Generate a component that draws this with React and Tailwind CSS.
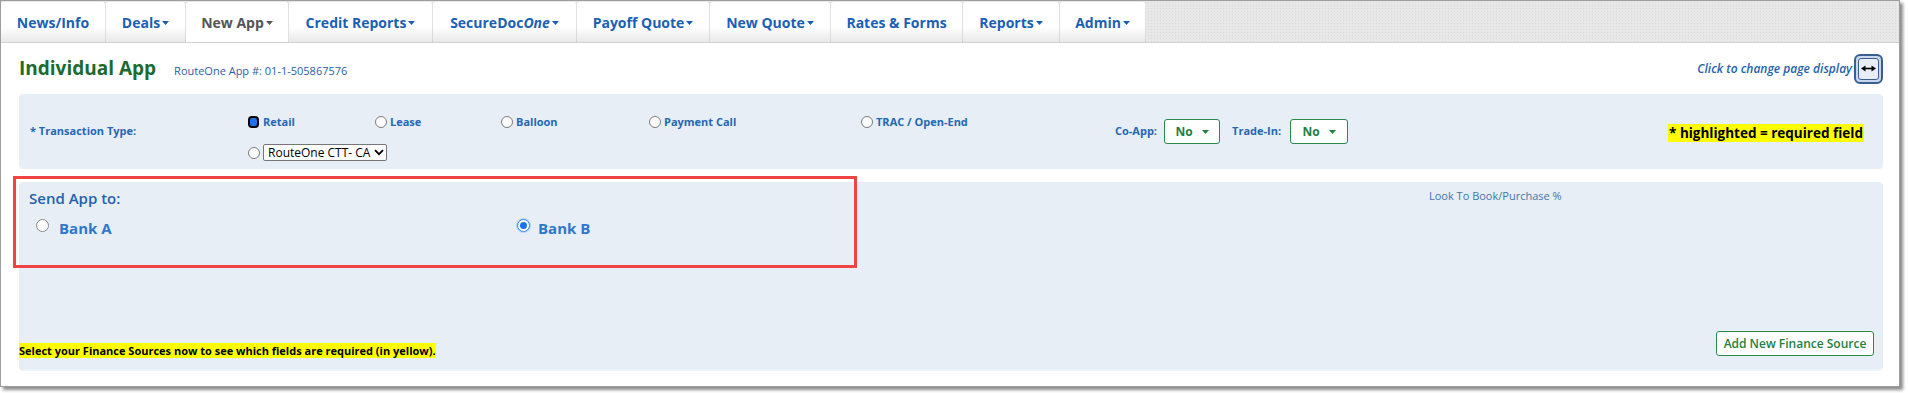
import React from "react";

const Caret = ({ color = "#1b5fb5" }) => (
  <svg width="7" height="4" viewBox="0 0 7 4" className="ml-[2px] mt-[2px] shrink-0">
    <path d="M0 0H7L3.5 4Z" fill={color} />
  </svg>
);

const tabs = [
  { label: "News/Info", w: "w-[105px]" },
  { label: "Deals", w: "w-[80px]", caret: true },
  { label: "New App", w: "w-[103px]", caret: true, active: true },
  { label: "Credit Reports", w: "w-[144px]", caret: true },
  { label: "SecureDoc", italic: "One", w: "w-[144px]", caret: true },
  { label: "Payoff Quote", w: "w-[133px]", caret: true },
  { label: "New Quote", w: "w-[121px]", caret: true },
  { label: "Rates & Forms", w: "w-[132px]" },
  { label: "Reports", w: "w-[97px]", caret: true },
  { label: "Admin", w: "w-[86px]", caret: true },
];

const Radio = () => (
  <span className="inline-block w-[12px] h-[12px] rounded-full border border-[#7a7a7a] bg-white shrink-0" />
);

const RadioOpt = ({ label, w }) => (
  <div className={`${w} flex items-center gap-[3px]`}>
    <Radio />
    <span className="text-[11px] font-bold leading-[16px] text-[#2567b4]">{label}</span>
  </div>
);

const GreenSelect = ({ w }) => (
  <div className={`${w} h-[25px] rounded-[3px] border border-[#2a8a4c] bg-white flex items-center justify-center gap-[9px]`}>
    <span className="text-[12px] font-bold text-[#23803f]">No</span>
    <svg width="7" height="4" viewBox="0 0 7 4">
      <path d="M0 0H7L3.5 4Z" fill="#23803f" />
    </svg>
  </div>
);

export default function App() {
  return (
    <div className="w-[1908px] h-[393px] bg-white font-['Open_Sans',sans-serif]">
      <div className="w-[1900px] h-[387px] border border-[#9d9d9d] shadow-[3px_3px_3px_rgba(0,0,0,0.45)] overflow-hidden flex flex-col bg-white">
        {/* Tab bar */}
        <div className="h-[42px] shrink-0 bg-[#e8e8e8] bg-[radial-gradient(#dadada_1px,transparent_1px)] bg-[length:3px_3px] flex items-end border-b border-[#d2d2d2]">
          {tabs.map((t, i) => (
            <div
              key={i}
              className={`${t.w} h-[40px] shrink-0 flex items-center justify-center rounded-t-[3px] border-r border-dotted border-[#c4c4c4] ${
                t.active ? "bg-white" : "bg-linear-to-b from-white from-[62%] to-[#e9e9e9]"
              }`}
            >
              <span className={`text-[14px] font-bold ${t.active ? "text-[#555555]" : "text-[#1b5fb5]"}`}>
                {t.label}
                {t.italic && <i>{t.italic}</i>}
              </span>
              {t.caret && <Caret color={t.active ? "#555555" : "#1b5fb5"} />}
            </div>
          ))}
        </div>

        <div className="flex flex-col pl-[18px] pr-[16px]">
          {/* Heading row */}
          <div className="h-[51px] flex items-center">
            <div className="flex items-baseline">
              <span className="text-[19px] font-bold text-[#1b6a2f]">Individual App</span>
              <span className="ml-[18px] text-[11px] text-[#2c5ea6]">RouteOne App #: 01-1-505867576</span>
            </div>
            <div className="ml-auto flex items-center">
              <span className="text-[12px] font-semibold italic text-[#2462ad]">Click to change page display</span>
              <span className="ml-[2px] w-[29px] h-[30px] rounded-[6px] border-2 border-[#3a5d93] bg-[#c9d7ea] p-[2px] flex">
                <span className="flex-1 rounded-[3px] border border-[#3a5d93] bg-[#e9eef6] flex items-center justify-center">
                  <svg width="15" height="7" viewBox="0 0 15 7">
                    <path d="M3 3.5H12" stroke="#000" strokeWidth="1.6" />
                    <path d="M0 3.5L4.5 0.5V6.5Z" fill="#000" />
                    <path d="M15 3.5L10.5 0.5V6.5Z" fill="#000" />
                  </svg>
                </span>
              </span>
            </div>
          </div>

          {/* Transaction panel */}
          <div className="h-[75px] rounded-[4px] bg-[#e7eef6] flex items-start">
            <div className="w-[229px] shrink-0 pl-[11px] pt-[29px] text-[11px] font-bold leading-[16px] text-[#2567b4]">
              * Transaction Type:
            </div>
            <div className="w-[867px] shrink-0 pt-[20px]">
              <div className="h-[16px] flex items-center">
                <div className="w-[127px] flex items-center gap-[4px]">
                  <span className="inline-block w-[11px] h-[12px] rounded-[4px] border-2 border-black bg-[#1a73e8] shrink-0" />
                  <span className="text-[11px] font-bold leading-[16px] text-[#2567b4]">Retail</span>
                </div>
                <RadioOpt label="Lease" w="w-[126px]" />
                <RadioOpt label="Balloon" w="w-[148px]" />
                <RadioOpt label="Payment Call" w="w-[212px]" />
                <RadioOpt label="TRAC / Open-End" w="w-[200px]" />
              </div>
              <div className="mt-[14px] flex items-center gap-[3px]">
                <Radio />
                <div className="w-[124px] h-[17px] rounded-[2px] border border-[#767676] bg-white flex items-center pl-[4px] pr-[2px] overflow-hidden">
                  <span className="flex-1 overflow-hidden whitespace-nowrap text-[12px] leading-[15px] text-black">
                    RouteOne CTT- CA Lease
                  </span>
                  <svg width="10" height="7" viewBox="0 0 10 7" className="shrink-0 ml-[1px]">
                    <path d="M1 1.2L5 5.2L9 1.2" stroke="#000" strokeWidth="1.8" fill="none" />
                  </svg>
                </div>
              </div>
            </div>
            <div className="self-center flex items-center">
              <span className="text-[11px] font-bold text-[#2567b4]">Co-App:</span>
              <div className="ml-[7px]">
                <GreenSelect w="w-[56px]" />
              </div>
              <span className="ml-[12px] text-[11px] font-bold text-[#2567b4]">Trade-In:</span>
              <div className="ml-[9px]">
                <GreenSelect w="w-[58px]" />
              </div>
            </div>
            <div className="ml-auto self-center pr-[19px]">
              <span className="bg-[#ffff00] text-[13.5px] font-bold leading-[17px] text-black px-[1px]">
                * highlighted = required field
              </span>
            </div>
          </div>

          {/* Send App panel */}
          <div className="relative mt-[13px] h-[187px] rounded-[4px] bg-[#e7eef6] shadow-[0_2px_0_0_#edf2f8] flex flex-col">
            <div className="absolute left-[-6px] top-[-6px] w-[844px] h-[92px] border-[3px] border-[#f04444] pointer-events-none" />
            <div className="flex items-start pt-[6px]">
              <div className="w-[1410px] shrink-0 pl-[10px] text-[15px] font-semibold leading-[20px] text-[#2462ad]">
                Send App to:
              </div>
              <div className="text-[11px] leading-[16px] text-[#4675ab]">Look To Book/Purchase %</div>
            </div>
            <div className="mt-[10px] flex items-start pl-[17px]">
              <div className="w-[481px] flex items-start gap-[10px]">
                <span className="mt-[1px] inline-block w-[13px] h-[13px] rounded-full border border-[#8a8a8a] bg-white shrink-0" />
                <span className="text-[15px] font-bold leading-[20px] text-[#2f77cc]">Bank A</span>
              </div>
              <div className="flex items-start gap-[8px]">
                <span className="mt-[1px] w-[13px] h-[13px] rounded-full border border-[#3b87e4] bg-white shadow-[0_0_0_1px_#b9d5f7] flex items-center justify-center shrink-0">
                  <span className="w-[7px] h-[7px] rounded-full bg-[#1a73e8]" />
                </span>
                <span className="text-[15px] font-bold leading-[20px] text-[#2f77cc]">Bank B</span>
              </div>
            </div>
            <div className="mt-auto flex items-end justify-between pr-[9px] pb-[13px]">
              <span className="mb-[-2px] bg-[#ffff00] text-[11px] font-bold leading-[15px] text-black">
                Select your Finance Sources now to see which fields are required (in yellow).
              </span>
              <div className="w-[158px] h-[25px] rounded-[3px] border border-[#2a8a4c] bg-white flex items-center justify-center">
                <span className="text-[12px] font-semibold text-[#23803f]">Add New Finance Source</span>
              </div>
            </div>
          </div>
        </div>
      </div>
    </div>
  );
}
